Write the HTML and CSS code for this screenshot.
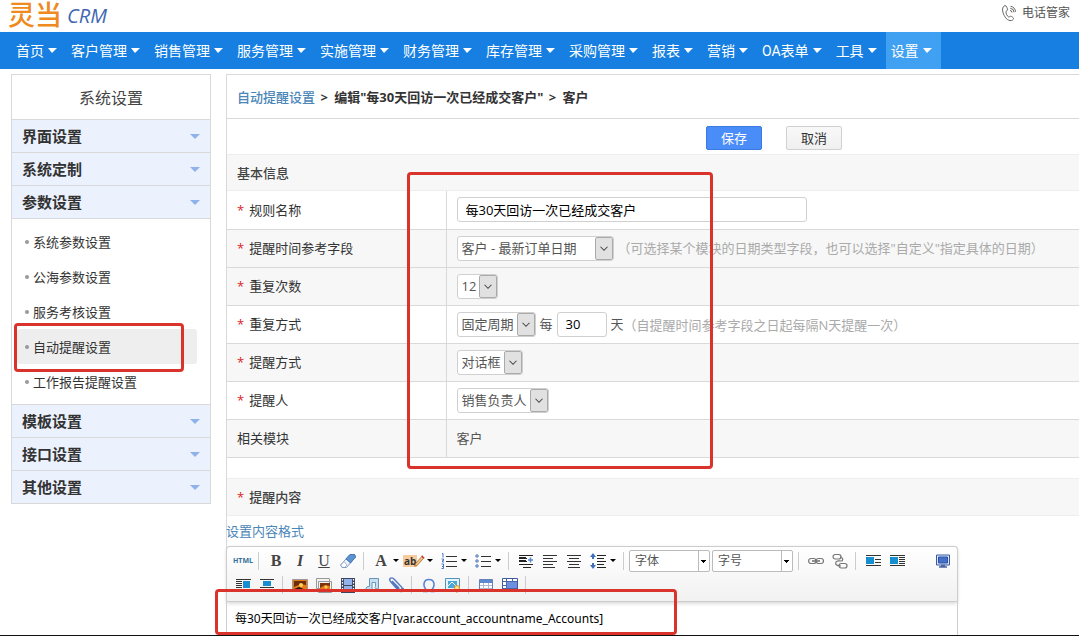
FILE: index.html
```html
<!DOCTYPE html>
<html lang="zh-CN">
<head>
<meta charset="utf-8">
<title>灵当 CRM</title>
<link rel="stylesheet" href="styles.css">
</head>
<body>
<header class="top">
  <div class="logo"><span class="logo-cn">灵当</span><span class="logo-en">CRM</span></div>
  <a class="phone" href="#">
    <svg width="16" height="18" viewBox="0 0 16 18" fill="none" stroke="#666" stroke-width="1"><path d="M4 1.500C1.500 2.500 1 5 2 8.500c1.300 4.300 3.800 7.500 7 8 2 .3 3.500-.8 3.500-2 0-.8-2-2.300-2.800-2.300-.8 0-1.200 1-2 .8C6.200 12.500 4.600 9 5 7.500c.3-.8 1.500-.7 1.600-1.600C6.700 5 5.300 1.300 4 1.500z"/><path d="M9 6.500a2 2 0 0 1 2 2M9.300 4.300a4 4 0 0 1 3.700 4M9.500 2.300a5.500 5.500 0 0 1 5 5.500"/></svg>
    <span>电话管家</span>
  </a>
</header>
<nav class="nav">
  <a href="#">首页</a><a href="#">客户管理</a><a href="#">销售管理</a><a href="#">服务管理</a><a href="#">实施管理</a><a href="#">财务管理</a><a href="#">库存管理</a><a href="#">采购管理</a><a href="#">报表</a><a href="#">营销</a><a href="#">OA表单</a><a href="#">工具</a><a class="on" href="#">设置</a>
</nav>
<div class="page">
  <aside class="side">
    <h2 class="side-title">系统设置</h2>
    <button class="group">界面设置</button>
    <button class="group">系统定制</button>
    <button class="group">参数设置</button>
    <ul class="sub">
      <li><a href="#">系统参数设置</a></li>
      <li><a href="#">公海参数设置</a></li>
      <li><a href="#">服务考核设置</a></li>
      <li><a class="current" href="#">自动提醒设置</a></li>
      <li><a href="#">工作报告提醒设置</a></li>
    </ul>
    <button class="group">模板设置</button>
    <button class="group">接口设置</button>
    <button class="group">其他设置</button>
  </aside>
  <main class="main">
    <h1 class="crumb"><a href="#">自动提醒设置</a> <span>&gt;</span> 编辑"每30天回访一次已经成交客户" <span>&gt;</span> 客户</h1>
    <div class="actions"><button class="btn primary">保存</button><button class="btn">取消</button></div>
    <h3 class="section">基本信息</h3>
    <table class="form">
      <tr><th><i>*</i><label for="name">规则名称</label></th><td><input id="name" class="text" value="每30天回访一次已经成交客户"></td></tr>
      <tr class="alt"><th><i>*</i><label for="field">提醒时间参考字段</label></th><td><span class="pick wide"><select id="field"><option>客户 - 最新订单日期</option></select><svg viewBox="0 0 18 24"><path d="M5 10l4 4 4-4"/></svg></span><span class="hint far">（可选择某个模块的日期类型字段，也可以选择"自定义"指定具体的日期）</span></td></tr>
      <tr class="alt"><th><i>*</i><label for="times">重复次数</label></th><td><span class="pick"><select id="times"><option>12</option></select><svg viewBox="0 0 18 24"><path d="M5 10l4 4 4-4"/></svg></span></td></tr>
      <tr><th><i>*</i><label for="mode">重复方式</label></th><td><span class="pick"><select id="mode"><option>固定周期</option></select><svg viewBox="0 0 18 24"><path d="M5 10l4 4 4-4"/></svg></span><label class="unit" for="days">每</label><input id="days" class="text days" value="30"><span class="day">天</span><span class="hint">（自提醒时间参考字段之日起每隔N天提醒一次）</span></td></tr>
      <tr class="alt"><th><i>*</i><label for="way">提醒方式</label></th><td><span class="pick"><select id="way"><option>对话框</option></select><svg viewBox="0 0 18 24"><path d="M5 10l4 4 4-4"/></svg></span></td></tr>
      <tr><th><i>*</i><label for="who">提醒人</label></th><td><span class="pick"><select id="who"><option>销售负责人</option></select><svg viewBox="0 0 18 24"><path d="M5 10l4 4 4-4"/></svg></span></td></tr>
      <tr class="alt"><th>相关模块</th><td>客户</td></tr>
    </table>
    <h3 class="section second"><i>*</i>提醒内容</h3>
    <a class="format" href="#">设置内容格式</a>
    <div class="editor">
      <div class="tools">
        <div class="row">
          <button class="t html">HTML</button><span class="sep"></span>
          <button class="t serif">B</button><button class="t serif it">I</button><button class="t serif un">U</button>
          <button class="t" aria-label="清除格式"><svg viewBox="0 0 16 16"><path d="M10 1.500h4.500l1 2.500-9 10.500H2L.5 12z" fill="#eef4fc" stroke="#7d9cc4"/><path d="M10 1.500h4.500l1 2.500-5 6L6 6z" fill="#5e93d3" stroke="#4775b0"/><path d="M1 12l3-3.500 3 3.500-2 2" fill="#fff" stroke="#a8b7cc"/></svg></button><span class="sep"></span>
          <button class="t serif drop"><span>A</span></button>
          <button class="t drop mark"><span><b>ab</b><svg viewBox="0 0 16 16"><path d="M3 14l1-3 7-8 2 2-7 8z" fill="#f1c27a" stroke="#9a5a22" stroke-width=".8"/><path d="M11 2l3 3" stroke="#c33" stroke-width="1.500"/></svg></span></button>
          <button class="t drop" aria-label="编号列表"><svg viewBox="0 0 16 16"><path d="M5 3.500h11M5 8.500h11M5 13.500h11" stroke="#333"/><path d="M1 .5h1v4M.5 6h2v1.500h-1v1.500h1.500M.5 11h2v4.500h-2M1 13.500h1" fill="none" stroke="#3667b5" stroke-width=".9"/></svg></button>
          <button class="t drop" aria-label="项目列表"><svg viewBox="0 0 16 16"><path d="M6 3.500h10M6 8.500h10M6 13.500h10" stroke="#333"/><g fill="#fff" stroke="#3667b5"><circle cx="2" cy="3" r="1.200"/><circle cx="2" cy="8" r="1.200"/><circle cx="2" cy="13" r="1.200"/></g></svg></button><span class="sep"></span>
          <button class="t" aria-label="缩进"><svg viewBox="0 0 16 16"><path d="M1 2.500h14M1 5.500h8M1 8.500h8M1 11.500h14M5 14.500h8" stroke="#222"/><path d="M1 4.500h7M1 7.500h7" stroke="#222"/><path d="M10 7h5M12.500 4.500v5" stroke="#5687ce" stroke-width="1.500"/></svg></button>
          <button class="t" aria-label="左对齐"><svg viewBox="0 0 16 16"><path d="M1 2.500h14M1 5.500h10M1 8.500h14M1 11.500h10M1 14.500h12" stroke="#333"/></svg></button>
          <button class="t" aria-label="居中"><svg viewBox="0 0 16 16"><path d="M1 2.500h14M3 5.500h10M1 8.500h14M3 11.500h10M2 14.500h12" stroke="#333"/></svg></button>
          <button class="t drop" aria-label="行距"><svg viewBox="0 0 16 16"><path d="M7 2.500h9M7 5.500h7M7 8.500h9M7 11.500h7M7 14.500h9" stroke="#222"/><path d="M3 0l3 4H4v2H2V4H0zM3 16l3-4H4v-2H2v2H0z" fill="#3e70bd"/></svg></button><span class="sep"></span>
          <button class="combo">字体</button><button class="combo">字号</button><span class="sep"></span>
          <button class="t" aria-label="链接"><svg viewBox="0 0 16 16" fill="none" stroke="#777" stroke-width="1.200"><rect x="0.600" y="5.500" width="7.500" height="5" rx="2.500"/><rect x="8" y="5.500" width="7.500" height="5" rx="2.500"/><path d="M4 8h8" stroke-width="1.600"/></svg></button>
          <button class="t" aria-label="取消链接"><svg viewBox="0 0 16 16" fill="none" stroke="#777" stroke-width="1.200"><rect x="1" y="1.500" width="8" height="4.500" rx="2.200"/><rect x="7" y="10.500" width="8" height="4.500" rx="2.200"/><path d="M8 4c4 1 3 4 1 4s-4-1-5 1 0 4 5 4" /></svg></button><span class="sep"></span>
          <button class="t" aria-label="左浮动"><svg viewBox="0 0 16 16"><path d="M1 2.500h15M10 6.500h6M10 9.500h6M1 12.500h15" stroke="#333"/><path d="M1 4h8v7H1z" fill="#168ed0"/></svg></button>
          <button class="t" aria-label="左环绕"><svg viewBox="0 0 16 16"><path d="M1 2.500h15M10 4.500h6M10 6.500h6M10 8.500h6M10 10.500h6M1 12.500h15" stroke="#333"/><path d="M1 4h8v7H1z" fill="#168ed0"/></svg></button>
          <button class="t full" aria-label="全屏"><svg viewBox="0 0 16 16"><path d="M1.500 2h13v10h-13z" fill="#dce6f8" stroke="#345aa8"/><path d="M3.500 4h9v6h-9z" fill="#4470c8" stroke="#2d4f9d"/><path d="M4 14h8M6 12.500h4" stroke="#4964a0" stroke-width="1.500"/></svg></button>
        </div>
        <div class="row">
          <button class="t" aria-label="右环绕"><svg viewBox="0 0 16 16"><path d="M1 2.500h15M1 4.500h6M1 6.500h6M1 8.500h6M1 10.500h6M1 12.500h15" stroke="#333"/><path d="M8 4h7v7H8z" fill="#168ed0"/></svg></button>
          <button class="t" aria-label="居中浮动"><svg viewBox="0 0 16 16"><path d="M1 2.500h14M1 10.500h14" stroke="#333"/><path d="M4 4h8v5H4z" fill="#168ed0"/></svg></button><span class="sep"></span>
          <button class="t" aria-label="图片"><svg viewBox="0 0 16 16"><path d="M.5 2.500h15v12H.5z" fill="#e77b18" stroke="#999"/><path d="M2 4h12v4L9 7 2 10z" fill="#6d2c0c"/><circle cx="9" cy="8" r="2" fill="#ffd35a"/><path d="M2 12l5-2 7 3H2z" fill="#2b1609"/></svg></button>
          <button class="t" aria-label="图库"><svg viewBox="0 0 16 16"><path d="M.5 1.500h13v10H.5zM2.500 4.500h13v11h-13z" fill="#f3f3f3" stroke="#999"/><path d="M4 6h10v8H4z" fill="#e77b18"/><path d="M4 6h10v3L9 8l-5 3z" fill="#7c340f"/><circle cx="10" cy="10" r="1.500" fill="#ffd35a"/></svg></button>
          <button class="t" aria-label="视频"><svg viewBox="0 0 16 16"><path d="M1 1h14v15H1z" fill="#3d4660"/><path d="M4 2h8v6H4zM4 9h8v6H4z" fill="#93b2ea"/><path d="M2.500 2v13M13.500 2v13" stroke="#fff" stroke-width="1.200" stroke-dasharray="1.500 1.500"/></svg></button>
          <button class="t" aria-label="音乐"><svg viewBox="0 0 16 16"><path d="M5.500 1.500h9v10a2 1.500 0 1 1-3-2V5.500H8v6a3 2 0 1 1-2.500-2z" fill="#c6dff0" stroke="#6796bd"/></svg></button>
          <button class="t" aria-label="附件"><svg viewBox="0 0 16 16" fill="none" stroke="#5479c1" stroke-width="1.400"><path d="M4 4l7 8c2 2 4-.5 2.500-2L6 2C3-.5.500 2 2.500 4.500L10 13c3 3 6 1 5-2M5 5l6 6"/></svg></button><span class="sep"></span>
          <button class="t" aria-label="特殊字符"><svg viewBox="0 0 16 16"><path d="M2 14.500h4v-1C1 9 2.500 2.500 8 2.500s7 6.500 2 11v1h4" fill="none" stroke="#5585d6" stroke-width="1.600"/></svg></button>
          <button class="t" aria-label="截图"><svg viewBox="0 0 16 16"><path d="M.5 1.500h14v12H.5z" fill="#e5f4fc" stroke="#5195bd"/><path d="M3 4h9v7H3z" fill="#48a8d8"/><path d="M3 9l4-4 5 5" stroke="#fff" fill="none"/><circle cx="12" cy="11" r="2.500" fill="#ffe08a" stroke="#d99927"/><path d="M12 13v3" stroke="#d99927"/></svg></button><span class="sep"></span>
          <button class="t" aria-label="表格"><svg viewBox="0 0 16 16"><path d="M1.500 2.500h13v12h-13z" fill="#fff" stroke="#6682b5"/><path d="M2 3h12v3H2z" fill="#5b87d5"/><path d="M2 8.500h12M2 11.500h12M5.500 6v8M10.500 6v8" stroke="#a9b9d4"/></svg></button>
          <button class="t" aria-label="单元格"><svg viewBox="0 0 16 16"><path d="M.5 1.500h15v13H.5z" fill="#fff" stroke="#3e5b9b"/><path d="M5 5h10v7H5z" fill="#6d8fe0"/><path d="M1 4.500h14M4.500 2v12M10.500 2v3M1 8.500h3M1 11.500h14" stroke="#4966a8"/></svg></button><span class="sep"></span>
        </div>
      </div>
      <div class="content" contenteditable="true">每30天回访一次已经成交客户[var.account_accountname_Accounts]</div>
    </div>
  </main>
</div>
<div class="box box-menu"></div>
<div class="box box-form"></div>
<div class="box box-content"></div>
</body>
</html>
```
FILE: styles.css
```css
* { box-sizing: border-box; }
html { height: 100%; overflow: hidden; }
body { margin: 0; height: 100%; position: relative; display: flex; flex-direction: column; overflow: hidden; background: #fff; color: #333; border-bottom: 1px solid #111; font: 13px/20px "Open Sans", "Noto Sans CJK SC", sans-serif; }
a { color: inherit; text-decoration: none; }
button, input, select { font: inherit; color: inherit; }
button { border: 0; background: none; padding: 0; cursor: pointer; }
i { font-style: normal; color: #d22; }

.top { display: flex; justify-content: space-between; height: 32px; flex: none; padding: 0 9px 0 8px; }
.logo { display: flex; align-items: flex-start; gap: 5px; }
.logo-cn { color: #ee8a20; font: 500 27px/27px "Noto Sans CJK SC", sans-serif; }
.logo-en { color: #3f68b2; font: italic 20px/31px "Open Sans", sans-serif; }
.phone { display: flex; align-items: center; gap: 5px; height: 26px; font-size: 12px; color: #555; }

.nav { display: flex; flex: none; height: 37px; padding-left: 11px; background: #167fe1; color: #fff; font-family: Roboto, "Noto Sans CJK SC", sans-serif; font-size: 14px; }
.nav a { display: flex; align-items: center; gap: 4px; padding: 0 9px 0 5px; white-space: nowrap; }
.nav a::after { content: ""; border: 5px solid transparent; border-top-color: #fff; border-bottom: 0; border-left-width: 4px; }
.nav .on { background: #40a0f2; }

.page { display: flex; align-items: flex-start; flex: 1; gap: 15px; min-height: 0; padding: 5px 0 0 11px; }
.side { width: 200px; flex: none; border: 1px solid #d9d9d9; }
.side-title { margin: 0; height: 44px; font-size: 16px; font-weight: 400; line-height: 46px; text-align: center; color: #444; }
.group { display: flex; align-items: center; justify-content: space-between; width: 100%; height: 33px; padding: 0 10px; border-top: 1px solid #d9d9d9; background: #ebf2fe; font-size: 15px; font-weight: 700; }
.group::after { content: ""; border: 5px solid transparent; border-top-color: #8fb2ea; border-bottom: 0; }
.sub { list-style: none; margin: 0; padding: 5px 13px 5px 5px; border-top: 1px solid #d9d9d9; }
.sub a { display: flex; align-items: center; gap: 4px; height: 35px; padding-left: 8px; border-radius: 3px; white-space: nowrap; }
.sub a::before { content: ""; width: 4px; height: 4px; border-radius: 50%; background: #999; }
.sub .current { background: #eee; }

.main { flex: 1; min-width: 0; align-self: stretch; display: flex; flex-direction: column; border: 1px solid #d9d9d9; border-width: 1px 0 0 1px; }
.crumb { margin: 0; height: 44px; padding-left: 10px; border-bottom: 1px solid #d9d9d9; font-size: 13px; line-height: 44px; white-space: nowrap; }
.crumb a { color: #4a86b8; font-weight: 500; }
.crumb span { margin: 0 3px 0 2px; }
.actions { display: flex; justify-content: center; gap: 24px; padding: 7px 0 4px; margin-left: 242px; width: 610px; }
.btn { width: 56px; height: 24px; border: 1px solid #d0d0d0; border-radius: 2px; background: linear-gradient(#f8f8f8, #f0f0f0); line-height: 20px; }
.primary { background: #4b8df8; border-color: #3a79e0; color: #fff; }
.section { margin: 0; height: 37px; padding-left: 10px; background: #f7f7f7; border: 1px solid #eee; border-width: 1px 0; font-size: 13px; font-weight: 500; line-height: 37px; color: #444; }
.form { width: 100%; border-collapse: collapse; }
.form tr { height: 38px; border-bottom: 1px solid #d9d9d9; }
.alt { background: #f7f7f7; }
.form th { width: 219px; padding: 0 10px; border-right: 1px solid #d9d9d9; font-weight: 400; text-align: left; }
.form i, .section i { margin-right: 5px; }
.form td { padding: 0 10px; color: #555; white-space: nowrap; }
.form td > * { vertical-align: middle; }
.text { width: 350px; height: 25px; padding: 0 8px; border: 1px solid #d0d0d0; border-radius: 3px; background: #fff; color: #000; }
.days { width: 50px; }
.pick { display: inline-grid; height: 25px; grid-template-columns: auto 18px; background: #fff; border: 1px solid #d0d0d0; border-radius: 3px; overflow: hidden; }
.wide { width: 157px; grid-template-columns: 1fr 18px; }
.pick select { appearance: none; border: 0; background: none; padding: 0 2px 0 4px; }
.pick svg { width: 18px; height: 23px; background: #e1e1e1; border: 1px solid #aaa; border-radius: 2px; fill: none; stroke: #444; stroke-width: 1.200; pointer-events: none; }
.unit { margin: 0 4px; }
.day { margin-left: 4px; }
.hint { color: #aaa; }
.far { margin-left: 4px; }

.second { margin-top: 20px; height: 38px; }
.format { align-self: flex-start; margin-left: -1px; line-height: 30px; color: #4a86b8; }
.editor { display: flex; flex: 1; flex-direction: column; width: 732px; max-width: 100%; margin-left: -1px; border: 1px solid #ccc; border-bottom: 0; border-radius: 4px 4px 0 0; }
.tools { padding: 2px 1px 4px 4px; border-bottom: 1px solid #ccc; border-radius: 4px 4px 0 0; background: linear-gradient(#fff, #f1f1f1); box-shadow: 0 1px 4px #ccc; }
.row { display: flex; align-items: center; height: 24px; }
.t { display: flex; align-items: center; justify-content: center; width: 24px; height: 24px; flex: none; }
.t svg { width: 16px; height: 16px; }
.html { font: 700 7px/12px "Open Sans", sans-serif; color: #32719c; }
.serif { font: 700 16px/20px "Liberation Serif", serif; color: #444; }
.it { font-style: italic; }
.un { font-weight: 400; text-decoration: underline; }
.drop { width: 34px; justify-content: flex-start; }
.drop > span { width: 24px; text-align: center; }
.drop > svg { margin: 0 4px; }
.drop::after { content: ""; border: 3px solid transparent; border-top-color: #000; border-bottom: 0; }
.mark > span { display: flex; align-items: center; }
.mark b { padding: 0 1px; background: #f8cb9c; font: 700 10px/12px "Open Sans", sans-serif; }
.mark svg { width: 14px; height: 14px; margin-left: -5px; flex: none; }
.sep { width: 1px; height: 18px; margin: 0 5px 0 3px; background: #ccc; flex: none; }
.combo { display: flex; flex: none; align-items: center; justify-content: space-between; width: 81px; height: 22px; margin-right: 2px; padding-left: 5px; border: 1px solid #bbb; border-radius: 2px; background: #fff; font-size: 12px; color: #555; }
.combo::after { content: ""; width: 10px; height: 20px; border-left: 1px solid #bbb; background: linear-gradient(#000, #000) 2px 9px / 5px 1px no-repeat, linear-gradient(#000, #000) 3px 10px / 3px 1px no-repeat, linear-gradient(#000, #000) 4px 11px / 1px 1px no-repeat; }
.full { margin-left: 22px; }
.content { padding: 8px; font: 12px/18px "Noto Sans", "Noto Sans CJK SC", sans-serif; color: #000; white-space: nowrap; }

.box { position: absolute; border: 3px solid #d9332b; border-radius: 4px; pointer-events: none; }
.box-menu { left: 14px; top: 323px; width: 170px; height: 49px; }
.box-form { left: 407px; top: 172px; width: 306px; height: 297px; }
.box-content { left: 215px; top: 589px; width: 462px; height: 46px; }
```
